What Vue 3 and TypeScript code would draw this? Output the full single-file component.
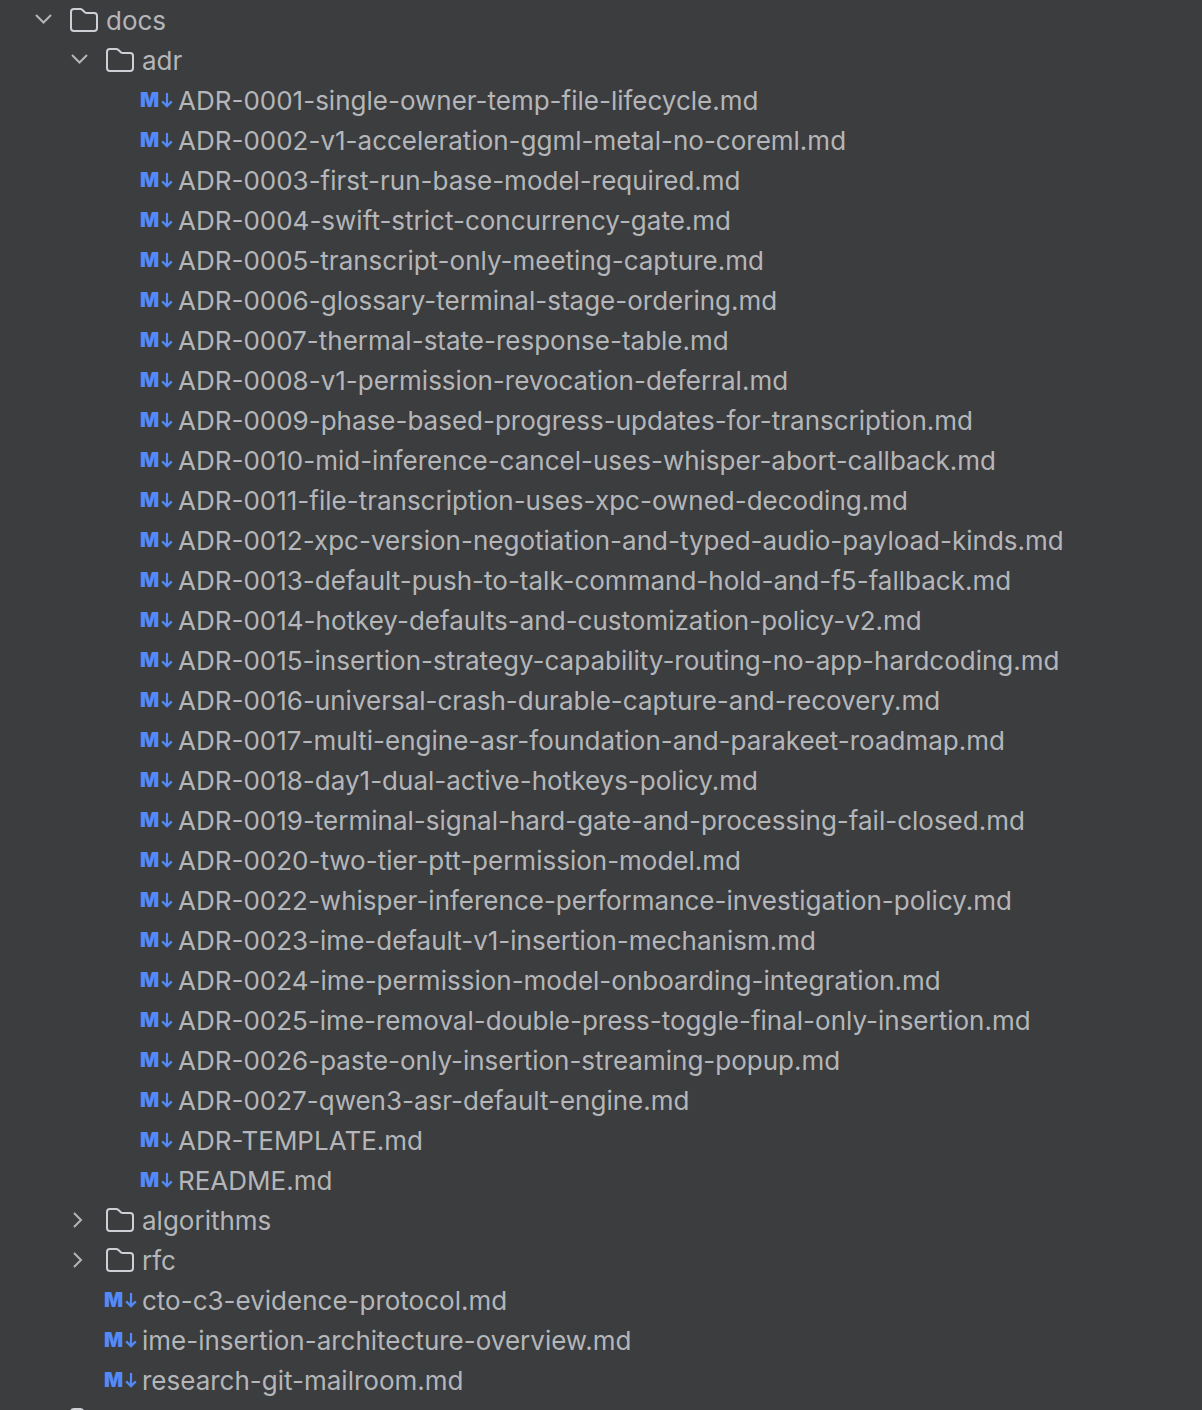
<script setup lang="ts">
interface TreeRow {
  name: string
  depth: number
  kind: 'open' | 'closed' | 'file'
}

const adrFiles = [
  'ADR-0001-single-owner-temp-file-lifecycle.md',
  'ADR-0002-v1-acceleration-ggml-metal-no-coreml.md',
  'ADR-0003-first-run-base-model-required.md',
  'ADR-0004-swift-strict-concurrency-gate.md',
  'ADR-0005-transcript-only-meeting-capture.md',
  'ADR-0006-glossary-terminal-stage-ordering.md',
  'ADR-0007-thermal-state-response-table.md',
  'ADR-0008-v1-permission-revocation-deferral.md',
  'ADR-0009-phase-based-progress-updates-for-transcription.md',
  'ADR-0010-mid-inference-cancel-uses-whisper-abort-callback.md',
  'ADR-0011-file-transcription-uses-xpc-owned-decoding.md',
  'ADR-0012-xpc-version-negotiation-and-typed-audio-payload-kinds.md',
  'ADR-0013-default-push-to-talk-command-hold-and-f5-fallback.md',
  'ADR-0014-hotkey-defaults-and-customization-policy-v2.md',
  'ADR-0015-insertion-strategy-capability-routing-no-app-hardcoding.md',
  'ADR-0016-universal-crash-durable-capture-and-recovery.md',
  'ADR-0017-multi-engine-asr-foundation-and-parakeet-roadmap.md',
  'ADR-0018-day1-dual-active-hotkeys-policy.md',
  'ADR-0019-terminal-signal-hard-gate-and-processing-fail-closed.md',
  'ADR-0020-two-tier-ptt-permission-model.md',
  'ADR-0022-whisper-inference-performance-investigation-policy.md',
  'ADR-0023-ime-default-v1-insertion-mechanism.md',
  'ADR-0024-ime-permission-model-onboarding-integration.md',
  'ADR-0025-ime-removal-double-press-toggle-final-only-insertion.md',
  'ADR-0026-paste-only-insertion-streaming-popup.md',
  'ADR-0027-qwen3-asr-default-engine.md',
  'ADR-TEMPLATE.md',
  'README.md',
]

const rows: TreeRow[] = [
  { name: 'docs', depth: 0, kind: 'open' },
  { name: 'adr', depth: 1, kind: 'open' },
  ...adrFiles.map((name): TreeRow => ({ name, depth: 2, kind: 'file' })),
  { name: 'algorithms', depth: 1, kind: 'closed' },
  { name: 'rfc', depth: 1, kind: 'closed' },
  { name: 'cto-c3-evidence-protocol.md', depth: 1, kind: 'file' },
  { name: 'ime-insertion-architecture-overview.md', depth: 1, kind: 'file' },
  { name: 'research-git-mailroom.md', depth: 1, kind: 'file' },
  // next row is cut off by the bottom edge, only the folder top shows
  { name: '', depth: 0, kind: 'closed' },
]
</script>

<template>
  <div class="tree">
    <div v-for="(row, i) in rows" :key="i" class="row" :class="`depth-${row.depth}`">
      <template v-if="row.kind === 'file'">
        <span class="md-icon">
          <span class="md-m">M</span>
          <svg class="md-arrow" width="12" height="16" viewBox="0 0 12 16" fill="none">
            <path d="M6 1v13M1.2 9.4L6 14.2l4.8-4.8" stroke="#548af7" stroke-width="2.2" />
          </svg>
        </span>
      </template>
      <template v-else>
        <svg class="chevron" width="20" height="20" viewBox="0 0 20 20" fill="none">
          <path v-if="row.kind === 'open'" d="M3 5l7.5 7.5L18 5" stroke="#b4b6b9" stroke-width="2" />
          <path v-else d="M5 3l7 7-7 7" stroke="#b4b6b9" stroke-width="2" />
        </svg>
        <svg class="folder" width="28" height="24" viewBox="0 0 28 24" fill="none">
          <path
            d="M1 4a3 3 0 0 1 3-3h6.2a3 3 0 0 1 2 .8l2.6 2.4a3 3 0 0 0 2 .8H24a3 3 0 0 1 3 3V20a3 3 0 0 1-3 3H4a3 3 0 0 1-3-3z"
            stroke="#ced0d6"
            stroke-width="2"
          />
        </svg>
      </template>
      <span class="label">{{ row.name }}</span>
    </div>
  </div>
</template>

<style scoped>
.tree {
  height: 1410px;
  overflow: hidden;
  background: #3c3d3f;
  font-family: Inter, "Liberation Sans", sans-serif;
  font-size: 26px;
  color: #b4b6b9;
}
.row {
  display: flex;
  align-items: center;
  height: 40px;
  white-space: nowrap;
}
.depth-0 { padding-left: 33px; }
.depth-1 { padding-left: 69px; }
.depth-2 { padding-left: 105px; }
.chevron {
  flex: none;
  margin-right: 17px;
}
.folder {
  flex: none;
  margin-right: 8px;
}
.md-icon {
  flex: none;
  display: flex;
  align-items: center;
  width: 37px;
  margin-left: 35px;
  margin-right: 1px;
  color: #548af7;
}
.md-m {
  font-size: 20px;
  font-weight: 900;
  line-height: 1;
}
.md-arrow {
  margin-left: 2px;
}
.label {
  line-height: 40px;
  padding-top: 2px;
}
</style>

<style>
html, body {
  background: #3c3d3f;
}
</style>
